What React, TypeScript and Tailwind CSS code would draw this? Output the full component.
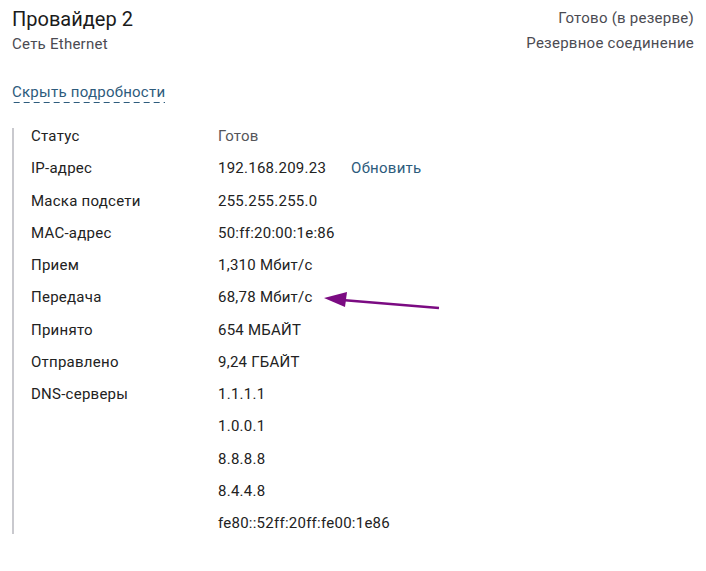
const rows: { label: string; values: string[]; muted?: boolean; action?: string }[] = [
  { label: "Статус", values: ["Готов"], muted: true },
  { label: "IP-адрес", values: ["192.168.209.23"], action: "Обновить" },
  { label: "Маска подсети", values: ["255.255.255.0"] },
  { label: "MAC-адрес", values: ["50:ff:20:00:1e:86"] },
  { label: "Прием", values: ["1,310 Мбит/с"] },
  { label: "Передача", values: ["68,78 Мбит/с"] },
  { label: "Принято", values: ["654 МБАЙТ"] },
  { label: "Отправлено", values: ["9,24 ГБАЙТ"] },
  { label: "DNS-серверы", values: ["1.1.1.1", "1.0.0.1", "8.8.8.8", "8.4.4.8", "fe80::52ff:20ff:fe00:1e86"] },
];

const App = () => {
  return (
    <div className="relative w-[706px] h-[571px] bg-white px-[12px] pt-[6px] font-['Roboto',sans-serif] text-[#202124] tracking-[0.25px]">
      <div className="flex justify-between">
        <div>
          <div className="text-[20px] leading-[26px] tracking-normal text-[#1b1b1b]">Провайдер 2</div>
          <div className="text-[15px] leading-[24px] text-[#4b4b52]">Сеть Ethernet</div>
        </div>
        <div className="text-right text-[15px] leading-[25px] text-[#4b4b52]">
          <div>Готово (в резерве)</div>
          <div>Резервное соединение</div>
        </div>
      </div>

      <div className="mt-[27px] flex text-[15px] leading-[18px]">
        <span className="text-[#2d5b7c] pb-[2px] bg-[linear-gradient(to_right,#2d5b7c_60%,transparent_60%)] bg-[length:10px_1px] bg-repeat-x bg-bottom">
          Скрыть подробности
        </span>
      </div>

      <div className="mt-[25px] border-l-2 border-[#c9c9ce] pl-[17px] pb-[3px] flex flex-col gap-y-[16.25px] text-[15px] leading-[16px]">
        {rows.map((row) =>
          row.values.map((v, i) => (
            <div key={row.label + i} className="flex">
              <div className="w-[187px] text-[#222]">{i === 0 ? row.label : ""}</div>
              <div className={row.muted ? "text-[#555559]" : "text-[#222]"}>{v}</div>
              {row.action && <div className="ml-[25px] text-[#2d5b7c]">{row.action}</div>}
            </div>
          ))
        )}
      </div>

      {/* annotation arrow */}
      <svg className="absolute left-0 top-0 pointer-events-none" width="706" height="571">
        <line x1="439" y1="308" x2="342" y2="300" stroke="#7b0b82" strokeWidth="2.5" />
        <polygon points="324,298 347,292 345,307" fill="#7b0b82" />
      </svg>
    </div>
  );
};

export default App;
